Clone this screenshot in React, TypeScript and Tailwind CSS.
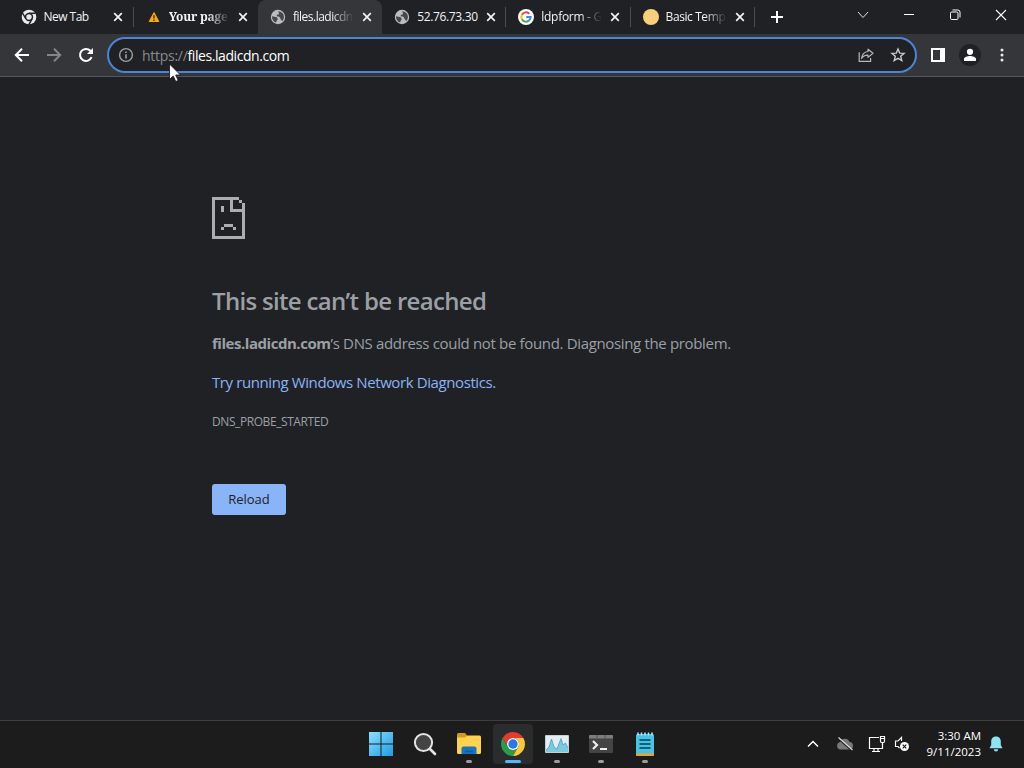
import type { ReactNode } from "react";

const FONT = "font-['Open_Sans','Noto_Sans',sans-serif]";

function ChromeMonoIcon() {
    return (
        <svg viewBox="0 0 24 24" className="w-4 h-4 shrink-0 -ml-px">
            <circle cx="12" cy="12" r="11" fill="#e8eaed" />
            <circle cx="12" cy="12" r="5.2" fill="#e8eaed" stroke="#202124" strokeWidth="2.2" />
            <path d="M12 6.5H22M7.2 14.6L2.2 6M16.8 14.6L11.8 23.3" stroke="#202124" strokeWidth="2.2" />
        </svg>
    );
}

function WarningIcon() {
    return (
        <svg viewBox="0 0 16 16" className="w-4 h-4 shrink-0">
            <path d="M8 3.5L12.8 12.5H3.2Z" fill="#f9ab00" stroke="#f9ab00" strokeLinejoin="round" />
            <path d="M8 6.2V9.5M8 10.6V12" stroke="#202124" strokeWidth="1.3" />
        </svg>
    );
}

function GlobeIcon() {
    return (
        <svg viewBox="0 0 16 16" className="w-4 h-4 shrink-0">
            <circle cx="8" cy="8" r="7.2" fill="#b9bcc0" />
            <path
                d="M2 7.2L5.5 8.1C7 8.3 7.8 9.2 7.6 10.4C7.5 11.2 6.7 11.3 6.5 12.1L6.1 13.6C3.6 12.8 1.9 10.3 2 7.2ZM8.2 2.2L10.9 2.9C12.9 4 13.9 5.7 13.9 8C13.9 9.6 13.2 11.2 12.2 12.2C11.8 11.2 11.3 10.6 10.5 10.2C10.5 8.8 9.8 7.9 8.6 7.5L6.6 7.2C6.5 6.1 7.2 5.5 8.4 5.5C9.2 5.2 9.2 4.3 8.7 3.8Z"
                fill="#45474b"
            />
        </svg>
    );
}

function GoogleIcon() {
    return (
        <svg viewBox="0 0 16 16" className="w-4 h-4 shrink-0">
            <circle cx="8" cy="8" r="8" fill="#fff" />
            <g fill="none" strokeWidth="2">
                <path d="M11.3 4.7A4.7 4.7 0 0 0 3.9 5.7" stroke="#ea4335" />
                <path d="M3.9 5.7A4.7 4.7 0 0 0 3.9 10.3" stroke="#fbbc05" />
                <path d="M3.9 10.3A4.7 4.7 0 0 0 11 11.6" stroke="#34a853" />
                <path d="M11 11.6A4.7 4.7 0 0 0 12.7 8H8.2" stroke="#4285f4" />
            </g>
        </svg>
    );
}

function CloseIcon() {
    return (
        <svg viewBox="0 0 10 10" className="w-2.5 h-2.5 shrink-0">
            <path d="M1.2 1.2L8.8 8.8M8.8 1.2L1.2 8.8" stroke="#f1f3f4" strokeWidth="1.7" />
        </svg>
    );
}

type TabProps = {
    icon: ReactNode;
    title: string;
    titleClass?: string;
    active?: boolean;
    fade?: boolean;
    separator?: boolean;
};

function Tab({ icon, title, titleClass = "", active, fade, separator }: TabProps) {
    return (
        <div
            className={`flex items-center w-[124.2px] h-[34px] pl-3 shrink-0 ${active ? "bg-[#35363a] rounded-t-lg" : ""}`}
        >
            {icon}
            <span
                className={`ml-[7px] w-[62px] shrink-0 whitespace-nowrap text-[12px] leading-4 text-[#f1f3f4] ${fade ? "[mask-image:linear-gradient(to_right,#000_62%,transparent_98%)]" : ""} ${titleClass}`}
            >
                {title}
            </span>
            <span className="ml-[7px] flex">
                <CloseIcon />
            </span>
            {separator && <span className="ml-auto w-px h-5 bg-[#4a4c50]" />}
        </div>
    );
}

function TabStrip() {
    return (
        <div className="flex h-[34px] bg-[#202124] pl-[9.6px]">
            <Tab icon={<ChromeMonoIcon />} title="New Tab" titleClass="tracking-[-0.55px]" separator />
            <Tab
                icon={<WarningIcon />}
                title="Your page"
                titleClass="font-bold font-['Noto_Serif','DejaVu_Serif',serif] tracking-[-0.2px]"
                fade
            />
            <Tab icon={<GlobeIcon />} title="files.ladicdn" titleClass="tracking-[-0.5px]" active fade />
            <Tab icon={<GlobeIcon />} title="52.76.73.30" titleClass="tracking-[-0.35px]" separator />
            <Tab icon={<GoogleIcon />} title="ldpform - G" titleClass="tracking-[-0.3px]" fade separator />
            <Tab
                icon={<span className="w-4 h-4 shrink-0 rounded-full bg-[#fbce7c]" />}
                title="Basic Temp"
                titleClass="tracking-[-0.4px]"
                fade
                separator
            />
            <div className="flex items-center ml-[16px]">
                <svg viewBox="0 0 12 12" className="w-3 h-3">
                    <path d="M6 0V12M0 6H12" stroke="#fff" strokeWidth="2" />
                </svg>
            </div>
            <div className="ml-auto flex h-[29px]">
                <div className="w-[46px] flex items-center justify-center">
                    <svg viewBox="0 0 12 12" className="w-3 h-3">
                        <path d="M1 3L6 8.5L11 3" fill="none" stroke="#e0e0e0" />
                    </svg>
                </div>
                <div className="w-[46px] flex items-center justify-center">
                    <span className="w-[10px] h-px bg-[#fff]" />
                </div>
                <div className="w-[46px] flex items-center justify-center">
                    <svg viewBox="0 0 12 12" className="w-3 h-3" fill="none" stroke="#fff">
                        <rect x="1.5" y="3" width="7.5" height="7.5" rx="1.2" />
                        <path d="M3.5 1H8.8Q11 1 11 3.2V8.5" />
                    </svg>
                </div>
                <div className="w-[46px] flex items-center justify-center">
                    <svg viewBox="0 0 12 12" className="w-3 h-3">
                        <path d="M1 1L11 11M11 1L1 11" stroke="#fff" strokeWidth="1.1" />
                    </svg>
                </div>
            </div>
        </div>
    );
}

function Toolbar() {
    return (
        <div className="flex items-center h-[43px] bg-[#35363a] border-b border-[#55565a] pl-[14px]">
            <svg viewBox="0 0 16 16" className="w-4 h-4" fill="none" stroke="#fff" strokeWidth="2">
                <path d="M15 8H2.2M8 1.8L1.8 8L8 14.2" />
            </svg>
            <svg viewBox="0 0 16 16" className="w-4 h-4 ml-4" fill="none" stroke="#838589" strokeWidth="2">
                <path d="M1 8H13.8M8 1.8L14.2 8L8 14.2" />
            </svg>
            <svg viewBox="0 0 16 16" className="w-4 h-4 ml-4" fill="none" stroke="#fff" strokeWidth="2">
                <path d="M13.6 10.2A6 6 0 1 1 12.4 3.8L14 5.4" />
                <path d="M15 1V7H9Z" fill="#fff" stroke="none" />
            </svg>
            <div className="flex items-center ml-[13px] w-[810px] h-9 rounded-full border-2 border-[#4b85d8] bg-[#202124] pl-[9px] pr-[9px]">
                <svg viewBox="0 0 16 16" className="w-4 h-4" fill="none" stroke="#9aa0a6" strokeWidth="1.4">
                    <circle cx="8" cy="8" r="6.4" />
                    <path d="M8 7.2V11.4M8 4.5V6" strokeWidth="1.6" />
                </svg>
                <span className="ml-[8px] pt-px text-[14px] leading-5 text-white whitespace-nowrap tracking-[-0.43px]">
                    <span className="text-[#868a8f] tracking-[-0.27px]">https://</span>
                    files.ladicdn.com
                </span>
                <svg viewBox="0 0 16 16" className="w-4 h-4 ml-auto" fill="none" stroke="#b4b7bb" strokeWidth="1.2">
                    <path d="M1.2 5.2V14.4H12.6V11" />
                    <path d="M10 2.2L15 6.3L10 10.4V8.2C7 8.1 5 9 3.6 11.4C4 7.4 6.4 4.9 10 4.5Z" strokeLinejoin="round" />
                </svg>
                <svg viewBox="0 0 16 16" className="w-4 h-4 ml-4" fill="none" stroke="#c8cacd" strokeWidth="1.4">
                    <path d="M8 2L9.7 6.1L14.1 6.4L10.7 9.3L11.8 13.6L8 11.3L4.2 13.6L5.3 9.3L1.9 6.4L6.3 6.1Z" />
                </svg>
            </div>
            <svg viewBox="0 0 14 14" className="w-3.5 h-3.5 ml-[14px]">
                <path d="M0 0H14V14H0ZM2 2V12H9V2Z" fill="#fff" fillRule="evenodd" />
            </svg>
            <div className="flex items-center justify-center w-[22px] h-[22px] ml-[14px] rounded-full bg-[#202124]">
                <svg viewBox="0 0 14 14" className="w-3.5 h-3.5" fill="#fff">
                    <circle cx="7" cy="3.8" r="3.1" />
                    <path d="M1 13V11C1 8.9 4.5 8 7 8S13 8.9 13 11V13Z" />
                </svg>
            </div>
            <svg viewBox="0 0 4 14" className="w-1 h-3.5 ml-[19px]" fill="#e8eaed">
                <circle cx="2" cy="2" r="1.5" />
                <circle cx="2" cy="7" r="1.5" />
                <circle cx="2" cy="12" r="1.5" />
            </svg>
        </div>
    );
}

function ErrorPage() {
    return (
        <main className="flex-1 bg-[#202124] pl-[212px] pt-[120px] text-[#9aa0a6]">
            <svg viewBox="0 0 11 14" className="w-[33px] h-[42px]" fill="#acadae" shapeRendering="crispEdges">
                <path d="M0 0H9V1H0ZM0 1H1V13H0ZM0 13H11V14H0ZM10 2H11V13H10ZM9 1H10V2H9Z" />
                <path d="M6 1H7V5H6ZM7 4H10V5H7Z" />
                <path d="M3 3H4V5H3ZM4 9H7V10H4ZM3 10H4V11H3ZM7 10H8V11H7Z" />
            </svg>
            <h1 className="mt-[45px] text-[24px] leading-[34px] font-semibold tracking-[-0.68px] whitespace-nowrap">
                This site can’t be reached
            </h1>
            <p className="mt-[13px] text-[15px] leading-6 whitespace-nowrap tracking-[-0.34px]">
                <strong className="tracking-[-0.46px]">files.ladicdn.com</strong>’s DNS address could not be found.
                Diagnosing the problem.
            </p>
            <p className="mt-[15px] text-[15px] leading-6 whitespace-nowrap tracking-[-0.4px] text-[#8ab4f8]">
                <a>Try running Windows Network Diagnostics</a>.
            </p>
            <p className="mt-[18px] text-[12px] leading-5 whitespace-nowrap tracking-[-0.42px]">DNS_PROBE_STARTED</p>
            <button className="mt-[52px] flex items-center justify-center w-[74px] h-[31px] rounded-[3px] bg-[#8ab4f8] text-[13px] text-[#202124]">
                Reload
            </button>
        </main>
    );
}

type AppSlotProps = { children: ReactNode; state?: "running" | "focused" };

function AppSlot({ children, state }: AppSlotProps) {
    return (
        <div
            className={`flex flex-col items-center w-10 h-10 pt-[8px] rounded ${state === "focused" ? "bg-[#2b2c2d]" : ""}`}
        >
            {children}
            {state === "running" && <span className="mt-[4px] w-[6px] h-[3px] rounded-full bg-[#9c9c9c]" />}
            {state === "focused" && <span className="mt-[4px] w-4 h-[3px] rounded-full bg-[#58b7ec]" />}
        </div>
    );
}

function Taskbar() {
    return (
        <footer className="flex items-center h-12 bg-[#1c1c1c] border-t border-[#3c3d3e] pl-[361px] pb-[2px]">
            <div className="flex gap-1">
                <AppSlot>
                    <svg viewBox="0 0 24 24" className="w-6 h-6">
                        <defs>
                            <linearGradient id="win" x1="0" y1="0" x2="24" y2="24" gradientUnits="userSpaceOnUse">
                                <stop stopColor="#8adfff" />
                                <stop offset="1" stopColor="#1f9be5" />
                            </linearGradient>
                        </defs>
                        <path d="M0 0H11.5V11.5H0ZM12.5 0H24V11.5H12.5ZM0 12.5H11.5V24H0ZM12.5 12.5H24V24H12.5Z" fill="url(#win)" />
                    </svg>
                </AppSlot>
                <AppSlot>
                    <svg viewBox="0 0 24 24" className="w-6 h-6" fill="none" stroke="#e4e4e4">
                        <path d="M17 17L22 22" strokeWidth="2.6" strokeLinecap="round" />
                        <circle cx="10.5" cy="10.5" r="8.6" fill="#444" strokeWidth="2" />
                    </svg>
                </AppSlot>
                <AppSlot state="running">
                    <svg viewBox="0 0 24 24" className="w-6 h-6">
                        <path d="M0 2.5Q0 1 1.5 1H8L10.5 4V6H0Z" fill="#d99a13" />
                        <path d="M0 5.5H8L10.5 3.5H22.5Q24 3.5 24 5V20.5Q24 22 22.5 22H1.5Q0 22 0 20.5Z" fill="#ffd253" />
                        <path d="M4.5 22V16.5Q4.5 14.5 6.5 14.5H17.5Q19.5 14.5 19.5 16.5V22Z" fill="#1675bd" />
                        <path d="M8 19.5H16" stroke="#0f5d9b" strokeWidth="1.5" />
                    </svg>
                </AppSlot>
                <AppSlot state="focused">
                    <svg viewBox="0 0 24 24" className="w-6 h-6">
                        <path d="M1.61 6A12 12 0 0 1 22.39 6H12A6 6 0 0 0 6.8 15Z" fill="#e33b2e" />
                        <path d="M1.61 6A12 12 0 0 0 12 24L17.2 15A6 6 0 0 1 6.8 15Z" fill="#2a9d4a" />
                        <path d="M22.39 6A12 12 0 0 1 12 24L17.2 15A6 6 0 0 0 12 6Z" fill="#fcc934" />
                        <circle cx="12" cy="12" r="6" fill="#fff" />
                        <circle cx="12" cy="12" r="4.7" fill="#2878e6" />
                    </svg>
                </AppSlot>
                <AppSlot state="running">
                    <svg viewBox="0 0 24 24" className="w-6 h-6">
                        <rect x="0" y="3" width="24" height="18" rx="1" fill="#c6d0d6" />
                        <rect x="1" y="4" width="22" height="16" fill="#e2edf4" />
                        <path d="M1 18L4 15L6.5 7L9 15L12 17L16 6.5L18 13L20.5 11L23 16V20H1Z" fill="#7bcbe0" />
                        <path
                            d="M1 18L4 15L6.5 7L9 15L12 17L16 6.5L18 13L20.5 11L23 16"
                            fill="none"
                            stroke="#4a9cbf"
                            strokeWidth="0.8"
                        />
                    </svg>
                </AppSlot>
                <AppSlot state="running">
                    <svg viewBox="0 0 24 24" className="w-6 h-6">
                        <rect x="0" y="3" width="24" height="18" rx="1" fill="#444" />
                        <path d="M0 6.5V4Q0 3 1 3H23Q24 3 24 4V6.5Z" fill="#7d7d7d" />
                        <path d="M8 3V6.5M16 3V6.5" stroke="#555" />
                        <path d="M4 9L8 13L4 17" fill="none" stroke="#eee" strokeWidth="2.2" />
                        <path d="M11 17H18" stroke="#eee" strokeWidth="2" />
                    </svg>
                </AppSlot>
                <AppSlot state="running">
                    <svg viewBox="0 0 24 24" className="w-6 h-6">
                        <rect x="3" y="2" width="18" height="22" rx="1.5" fill="#49c3e4" />
                        <path d="M3 21.5H21V22.5Q21 24 19.5 24H4.5Q3 24 3 22.5Z" fill="#e9a52c" />
                        <path d="M5 0.5V3.5M8.5 0.5V3.5M12 0.5V3.5M15.5 0.5V3.5M19 0.5V3.5" stroke="#a8e9f8" strokeWidth="1.6" />
                        <path d="M6.5 8H17.5M6.5 12H17.5M6.5 16H17.5" stroke="#10607e" strokeWidth="1.8" />
                    </svg>
                </AppSlot>
            </div>
            <div className="ml-auto flex items-center pr-[21px]">
                <svg viewBox="0 0 12 8" className="w-3 h-2" fill="none" stroke="#fff" strokeWidth="1.5">
                    <path d="M1 6.5L6 1.5L11 6.5" />
                </svg>
                <svg viewBox="0 0 18 14" className="w-[18px] h-3.5 ml-[17px]">
                    <path d="M4.5 12.5A3.8 3.8 0 0 1 4.2 5A5 5 0 0 1 13.5 5A3.8 3.8 0 0 1 14 12.5Z" fill="#77797b" />
                    <path d="M2 1L16 13.5" stroke="#1c1c1c" strokeWidth="2" />
                    <path d="M2.5 0.5L16.5 13" stroke="#e0e0e0" strokeWidth="1.2" />
                </svg>
                <svg viewBox="0 0 18 18" className="w-[18px] h-[18px] ml-[14px]" fill="none" stroke="#fff" strokeWidth="1.2">
                    <path d="M11 2.5H1.5V13.5H14.5V9M6 13.5V16.5M10 13.5V16.5M4 16.5H12" />
                    <path d="M12.5 1.5H16.5V6Q16.5 7.500 15.500 7.500H13.500Q12.500 7.500 12.500 6ZM12.500 3.500H16.500M14.500 7.500V10" />
                </svg>
                <svg viewBox="0 0 16 16" className="w-4 h-4 ml-[8px]" fill="none" stroke="#fff" strokeWidth="1.2">
                    <path d="M7.5 5V1.5L4 5H1.5V10.5H4L5.5 12" />
                    <circle cx="10.5" cy="10.5" r="4.5" fill="#fff" stroke="none" />
                    <path d="M8.7 8.7L12.3 12.3M12.3 8.7L8.7 12.3" stroke="#1c1c1c" />
                </svg>
                <div className="ml-[14px] w-[57px] text-right text-[11.5px] leading-4 text-white whitespace-nowrap">
                    <div>3:30 AM</div>
                    <div>9/11/2023</div>
                </div>
                <svg viewBox="0 0 14 16" className="w-3.5 h-4 ml-[8px]" fill="#8ee3f5">
                    <path d="M7 0.5C3.8 0.5 2.2 2.8 2.2 5.5V9L0.5 12.3H13.5L11.8 9V5.5C11.8 2.8 10.2 0.5 7 0.5ZM4.8 13.2H9.2A2.2 2.2 0 0 1 4.8 13.2Z" />
                </svg>
            </div>
        </footer>
    );
}

export default function App() {
    return (
        <div className={`relative flex flex-col w-[1024px] h-[768px] overflow-hidden ${FONT}`}>
            <TabStrip />
            <Toolbar />
            <ErrorPage />
            <Taskbar />
            {/* mouse pointer */}
            <svg viewBox="0 0 12 19" className="absolute left-[169px] top-[63px] w-3 h-[19px]">
                <path d="M0.5 1V16.5L4.2 13L6.8 18.5L9.2 17.4L6.7 12H11.5Z" fill="#fff" stroke="#111" strokeWidth="0.8" />
            </svg>
        </div>
    );
}
